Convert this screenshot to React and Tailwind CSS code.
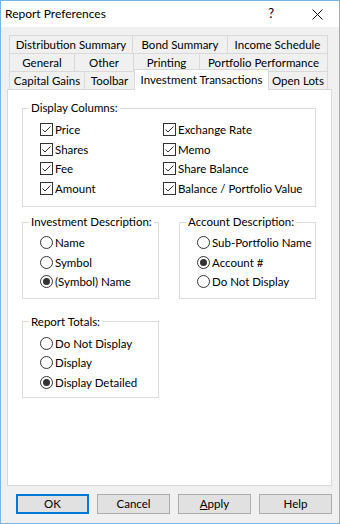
import React from 'react';

const rowTabs = [
  [
    { label: 'Distribution Summary', w: 'w-[123px]' },
    { label: 'Bond Summary', w: 'w-[95px]' },
    { label: 'Income Schedule', w: 'w-[101px]' },
  ],
  [
    { label: 'General', w: 'w-[65px]' },
    { label: 'Other', w: 'w-[59px]' },
    { label: 'Printing', w: 'w-[66px]' },
    { label: 'Portfolio Performance', w: 'w-[129px]' },
  ],
];

function CheckBox() {
  return (
    <svg width="13" height="13" viewBox="0 0 13 13" className="shrink-0">
      <rect x="0.5" y="0.5" width="12" height="12" fill="white" stroke="#333" />
      <polyline points="2.5,6.5 5,9 10.5,3.5" fill="none" stroke="#333" strokeWidth="1" />
    </svg>
  );
}

function Radio({ checked }) {
  return (
    <svg width="13" height="13" viewBox="0 0 13 13" className="shrink-0">
      <circle cx="6.5" cy="6.5" r="6" fill="white" stroke="#333" />
      {checked && <circle cx="6.5" cy="6.5" r="3.5" fill="#333" />}
    </svg>
  );
}

function Group({ title, className, children }) {
  return (
    <fieldset className={`border border-[#dcdcdc] ${className}`}>
      <legend className="ml-[6px] px-[2px] leading-[16px] whitespace-nowrap">{title}</legend>
      {children}
    </fieldset>
  );
}

function Option({ type, label, checked }) {
  return (
    <div className="h-[19.5px] flex items-center gap-[2px] whitespace-nowrap">
      {type === 'check' ? <CheckBox /> : <Radio checked={checked} />}
      <span className="leading-none">{label}</span>
    </div>
  );
}

export default function App() {
  return (
    <div className="w-[340px] h-[524px] border border-[#7ab4ea] bg-[#f0f0f0] flex flex-col text-[11.5px] text-black font-['Lato',sans-serif]">
      {/* title bar */}
      <div className="h-[26px] bg-white flex items-center pl-[4px] shrink-0">
        <span className="text-[12px]">Report Preferences</span>
        <span className="ml-auto text-[13px] mr-[38px]">?</span>
        <svg width="11" height="11" viewBox="0 0 11 11" className="mr-[16px]">
          <path d="M0.5 0.5 L10.5 10.5 M10.5 0.5 L0.5 10.5" stroke="#111" strokeWidth="1" />
        </svg>
      </div>

      <div className="flex-1 px-[6px] pt-[8px]">
        {/* tabs */}
        <div className="ml-[2px]">
          {rowTabs.map((row, i) => (
            <div key={i} className="flex h-[18px]">
              {row.map((t, j) => (
                <div
                  key={t.label}
                  className={`${t.w} border-t border-l border-[#d9d9d9] flex items-center justify-center whitespace-nowrap ${j === row.length - 1 ? 'border-r' : ''}`}
                >
                  {t.label}
                </div>
              ))}
            </div>
          ))}
          <div className="flex h-[18px] items-end">
            <div className="w-[75px] h-[18px] border-t border-l border-[#d9d9d9] flex items-center justify-center">Capital Gains</div>
            <div className="w-[50px] h-[18px] border-t border-l border-[#d9d9d9] flex items-center justify-center">Toolbar</div>
            <div className="w-[135px] h-[21px] relative top-[1px] z-10 bg-white border-t border-l border-r border-[#d9d9d9] flex items-start pt-[1px] justify-center whitespace-nowrap">
              Investment Transactions
            </div>
            <div className="w-[59px] h-[18px] border-t border-r border-[#d9d9d9] flex items-center justify-center">Open Lots</div>
          </div>
        </div>

        {/* panel */}
        <div className="w-[325px] h-[397px] border border-[#d9d9d9] bg-white pl-[14px]">
          <Group title="Display Columns:" className="w-[294px] mt-[10px] pt-[4px] pb-[8px]">
            <div className="grid grid-cols-[123px_1fr] pl-[17px]">
              <div>
                <Option type="check" label="Price" />
                <Option type="check" label="Shares" />
                <Option type="check" label="Fee" />
                <Option type="check" label="Amount" />
              </div>
              <div>
                <Option type="check" label="Exchange Rate" />
                <Option type="check" label="Memo" />
                <Option type="check" label="Share Balance" />
                <Option type="check" label="Balance / Portfolio Value" />
              </div>
            </div>
          </Group>

          <div className="flex gap-[20px] mt-[7px]">
            <Group title="Investment Description:" className="w-[137px] pt-[3px] pb-[6px]">
              <div className="pl-[17px]">
                <Option type="radio" label="Name" />
                <Option type="radio" label="Symbol" />
                <Option type="radio" label="(Symbol) Name" checked />
              </div>
            </Group>
            <Group title="Account Description:" className="w-[137px] pt-[3px] pb-[6px]">
              <div className="pl-[17px]">
                <Option type="radio" label="Sub-Portfolio Name" />
                <Option type="radio" label="Account #" checked />
                <Option type="radio" label="Do Not Display" />
              </div>
            </Group>
          </div>

          <Group title="Report Totals:" className="w-[137px] mt-[15px] pt-[4px] pb-[5px]">
            <div className="pl-[17px]">
              <Option type="radio" label="Do Not Display" />
              <Option type="radio" label="Display" />
              <Option type="radio" label="Display Detailed" checked />
            </div>
          </Group>
        </div>

        {/* buttons */}
        <div className="flex gap-[8px] mt-[8px] ml-[9px]">
          <button className="w-[73px] h-[20px] border-2 border-[#0078d7] bg-[#e1e1e1] flex items-center justify-center">OK</button>
          <button className="w-[73px] h-[20px] border border-[#adadad] bg-[#e1e1e1] flex items-center justify-center">Cancel</button>
          <button className="w-[73px] h-[20px] border border-[#adadad] bg-[#e1e1e1] flex items-center justify-center">
            <span><span className="underline">A</span>pply</span>
          </button>
          <button className="w-[73px] h-[20px] border border-[#adadad] bg-[#e1e1e1] flex items-center justify-center">Help</button>
        </div>
      </div>
    </div>
  );
}
